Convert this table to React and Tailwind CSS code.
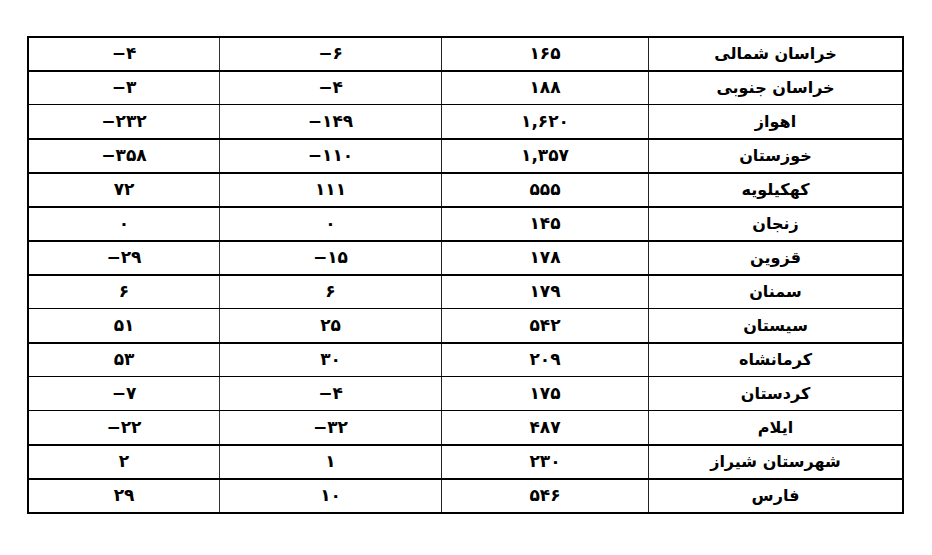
const M = '\u2212';

const rows = [
  { name: 'خراسان شمالی', total: '۱۶۵', a: M + '۶', b: M + '۴', thick: true },
  { name: 'خراسان جنوبی', total: '۱۸۸', a: M + '۴', b: M + '۳', thick: true },
  { name: 'اهواز', total: '۱,۶۲۰', a: M + '۱۴۹', b: M + '۲۳۲', thick: false },
  { name: 'خوزستان', total: '۱,۳۵۷', a: M + '۱۱۰', b: M + '۳۵۸', thick: true },
  { name: 'کهکیلویه', total: '۵۵۵', a: '۱۱۱', b: '۷۲', thick: true },
  { name: 'زنجان', total: '۱۴۵', a: '۰', b: '۰', thick: true },
  { name: 'قزوین', total: '۱۷۸', a: M + '۱۵', b: M + '۲۹', thick: true },
  { name: 'سمنان', total: '۱۷۹', a: '۶', b: '۶', thick: true },
  { name: 'سیستان', total: '۵۴۲', a: '۲۵', b: '۵۱', thick: false },
  { name: 'کرمانشاه', total: '۲۰۹', a: '۳۰', b: '۵۳', thick: true },
  { name: 'کردستان', total: '۱۷۵', a: M + '۴', b: M + '۷', thick: false },
  { name: 'ایلام', total: '۴۸۷', a: M + '۳۲', b: M + '۲۲', thick: false },
  { name: 'شهرستان شیراز', total: '۲۳۰', a: '۱', b: '۲', thick: true },
  { name: 'فارس', total: '۵۴۶', a: '۱۰', b: '۲۹', thick: true },
];

function Num({ children }) {
  return (
    <span dir="ltr" className="[unicode-bidi:isolate]">
      {children}
    </span>
  );
}

function Row({ row }) {
  const rowClass = row.thick
    ? 'flex h-[34px] border-t-2 border-black'
    : 'flex h-[34px] border-t border-black';
  const cell = 'flex items-center justify-center';
  const num = `${cell} text-[17px]`;

  return (
    <div className={rowClass}>
      <div className={`${cell} w-[254px] border-l border-l-[#222] text-[16px]`}>{row.name}</div>
      <div className={`${num} w-[207px] border-l border-l-[#222]`}>
        <Num>{row.total}</Num>
      </div>
      <div className={`${num} w-[222px] border-l border-l-[#333]`}>
        <Num>{row.a}</Num>
      </div>
      <div className={`${num} w-[190px]`}>
        <Num>{row.b}</Num>
      </div>
    </div>
  );
}

export default function App() {
  return (
    <div className="h-[555px] w-[932px] bg-white pt-[36px] pl-[27px]">
      <div
        dir="rtl"
        className="w-[877px] border-x-2 border-b-2 border-black font-bold text-black"
        style={{ fontFamily: '"DejaVu Sans", sans-serif' }}
      >
        {rows.map((row) => (
          <Row key={row.name} row={row} />
        ))}
      </div>
    </div>
  );
}
